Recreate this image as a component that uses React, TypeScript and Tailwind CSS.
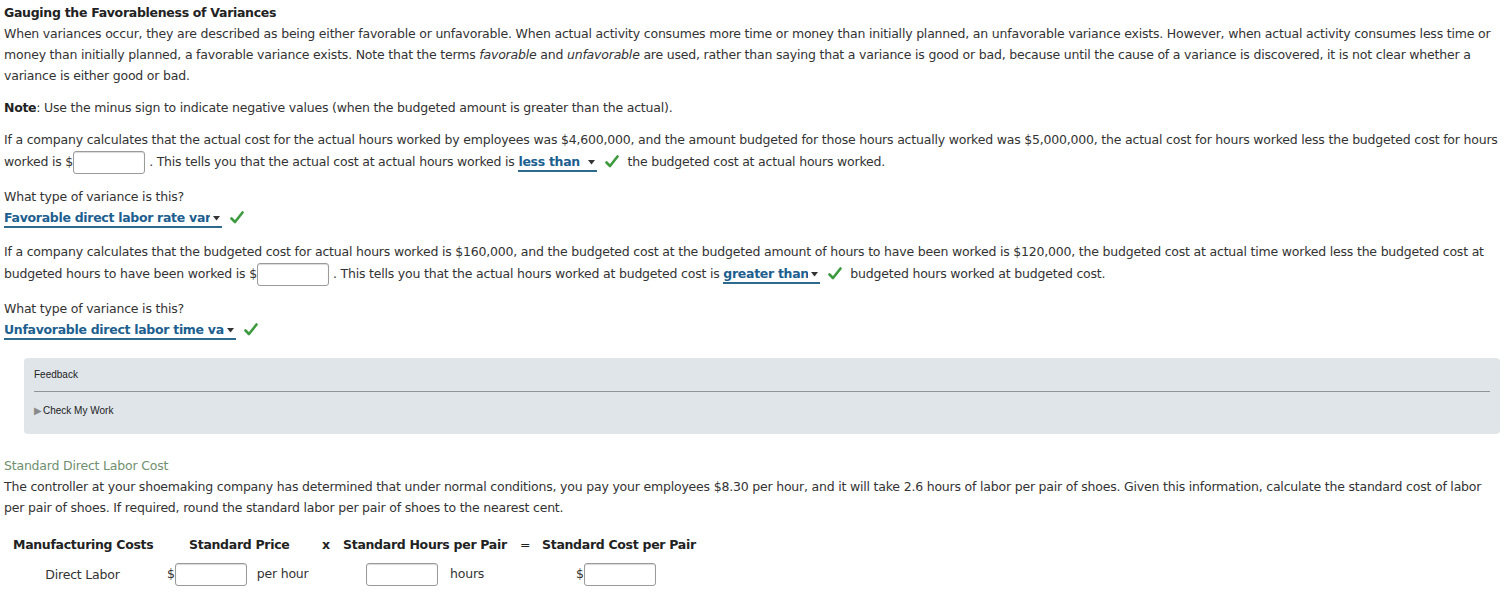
import React from 'react';

const Check = () => (
  <svg className="inline-block align-[-2px] mx-[8px]" width="14" height="13" viewBox="0 0 14 13">
    <path d="M1.5 7.5 L5 11 L12.5 1.5" fill="none" stroke="#3d9a3f" strokeWidth="2.6" strokeLinecap="round" strokeLinejoin="round" />
  </svg>
);

const Blank = () => (
  <span className="inline-block w-[72px] h-[23px] align-middle border border-[#9a9a9a] rounded-[3px] bg-white shadow-[inset_0_1px_1px_rgba(0,0,0,0.15)]" />
);

const Pick = ({ label, w }: { label: string; w: string }) => (
  <span className={`inline-flex items-center ${w} h-[18px] border-b-2 border-[#2e6a8e] text-[#1d5f8f] font-bold tracking-[-0.3px] whitespace-nowrap align-baseline leading-[16px]`}>
    <span className="flex-1 min-w-0 overflow-hidden">{label}</span>
    <svg className="shrink-0 ml-[3px] mr-[2px]" width="7" height="5" viewBox="0 0 7 5">
      <path d="M0 0 H7 L3.5 4.5 Z" fill="#333" />
    </svg>
  </span>
);

export default function App() {
  return (
    <div className="w-[1508px] h-[599px] bg-white overflow-hidden text-[#333] text-[12.5px] leading-[21px] tracking-[-0.2px]" style={{ fontFamily: '"DejaVu Sans", Verdana, sans-serif' }}>
      <div className="px-[4px] pt-[2px]">
        <div className="font-bold text-[#222] tracking-[-0.3px]">Gauging the Favorableness of Variances</div>
        <p>
          When variances occur, they are described as being either favorable or unfavorable. When actual activity consumes more time or money than initially planned, an unfavorable variance exists. However, when actual activity consumes less time or money than initially planned, a favorable variance exists. Note that the terms <i>favorable</i> and <i>unfavorable</i> are used, rather than saying that a variance is good or bad, because until the cause of a variance is discovered, it is not clear whether a variance is either good or bad.
        </p>
        <p className="mt-[11px]">
          <b className="text-[#222] tracking-[-0.3px]">Note</b>: Use the minus sign to indicate negative values (when the budgeted amount is greater than the actual).
        </p>

        <p className="mt-[11px] leading-[22px]">
          If a company calculates that the actual cost for the actual hours worked by employees was $4,600,000, and the amount budgeted for those hours actually worked was $5,000,000, the actual cost for hours worked less the budgeted cost for hours worked is $<Blank />
          <span className="ml-[4px]">. This tells you that the actual cost at actual hours worked is </span>
          <Pick label="less than" w="w-[79px]" />
          <Check />
          the budgeted cost at actual hours worked.
        </p>

        <p className="mt-[12px]">What type of variance is this?</p>
        <div>
          <Pick label="Favorable direct labor rate variance" w="w-[218px]" />
          <Check />
        </div>

        <p className="mt-[13px] leading-[22px]">
          If a company calculates that the budgeted cost for actual hours worked is $160,000, and the budgeted cost at the budgeted amount of hours to have been worked is $120,000, the budgeted cost at actual time worked less the budgeted cost at budgeted hours to have been worked is $<Blank />
          <span className="ml-[4px]">. This tells you that the actual hours worked at budgeted cost is </span>
          <Pick label="greater than" w="w-[97px]" />
          <Check />
          budgeted hours worked at budgeted cost.
        </p>

        <p className="mt-[12px]">What type of variance is this?</p>
        <div>
          <Pick label="Unfavorable direct labor time variance" w="w-[232px]" />
          <Check />
        </div>
      </div>

      <div className="ml-[24px] mr-[8px] mt-[18px] h-[76px] rounded-[4px] bg-[#dfe5e9] px-[10px] pt-[10px] tracking-normal" style={{ fontFamily: '"Liberation Sans", Arial, sans-serif' }}>
        <div className="text-[10px] leading-[14px] text-[#222]">Feedback</div>
        <div className="mt-[9px] h-px bg-[#8b959b]" />
        <div className="mt-[12px] text-[10px] leading-[14px] text-[#222] flex items-center">
          <span className="text-[10px] leading-[10px] text-[#8a8a8a] mr-[1px]">▶</span>Check My Work
        </div>
      </div>

      <div className="px-[4px] mt-[21px]">
        <div className="text-[#6f8f6f]">Standard Direct Labor Cost</div>
        <p>
          The controller at your shoemaking company has determined that under normal conditions, you pay your employees $8.30 per hour, and it will take 2.6 hours of labor per pair of shoes. Given this information, calculate the standard cost of labor per pair of shoes. If required, round the standard labor per pair of shoes to the nearest cent.
        </p>

        <div className="mt-[12px] flex h-[29px] items-center font-bold text-[#222] tracking-[-0.3px] whitespace-nowrap">
          <div className="w-[157px] pl-[9px]">Manufacturing Costs</div>
          <div className="w-[157px] pl-[28px]">Standard Price</div>
          <div className="w-[20px] pl-[4px]">x</div>
          <div className="w-[178px] pl-[5px]">Standard Hours per Pair</div>
          <div className="w-[20px] pl-[4px] font-normal">=</div>
          <div className="pl-[6px]">Standard Cost per Pair</div>
        </div>
        <div className="flex h-[31px] items-center whitespace-nowrap">
          <div className="w-[157px] text-center">Direct Labor</div>
          <div className="w-[177px] pl-[6px]">
            $<Blank /><span className="ml-[10px]">per hour</span>
          </div>
          <div className="w-[198px] pl-[28px]">
            <Blank /><span className="ml-[12px]">hours</span>
          </div>
          <div className="pl-[40px]">
            $<Blank />
          </div>
        </div>
      </div>
    </div>
  );
}
